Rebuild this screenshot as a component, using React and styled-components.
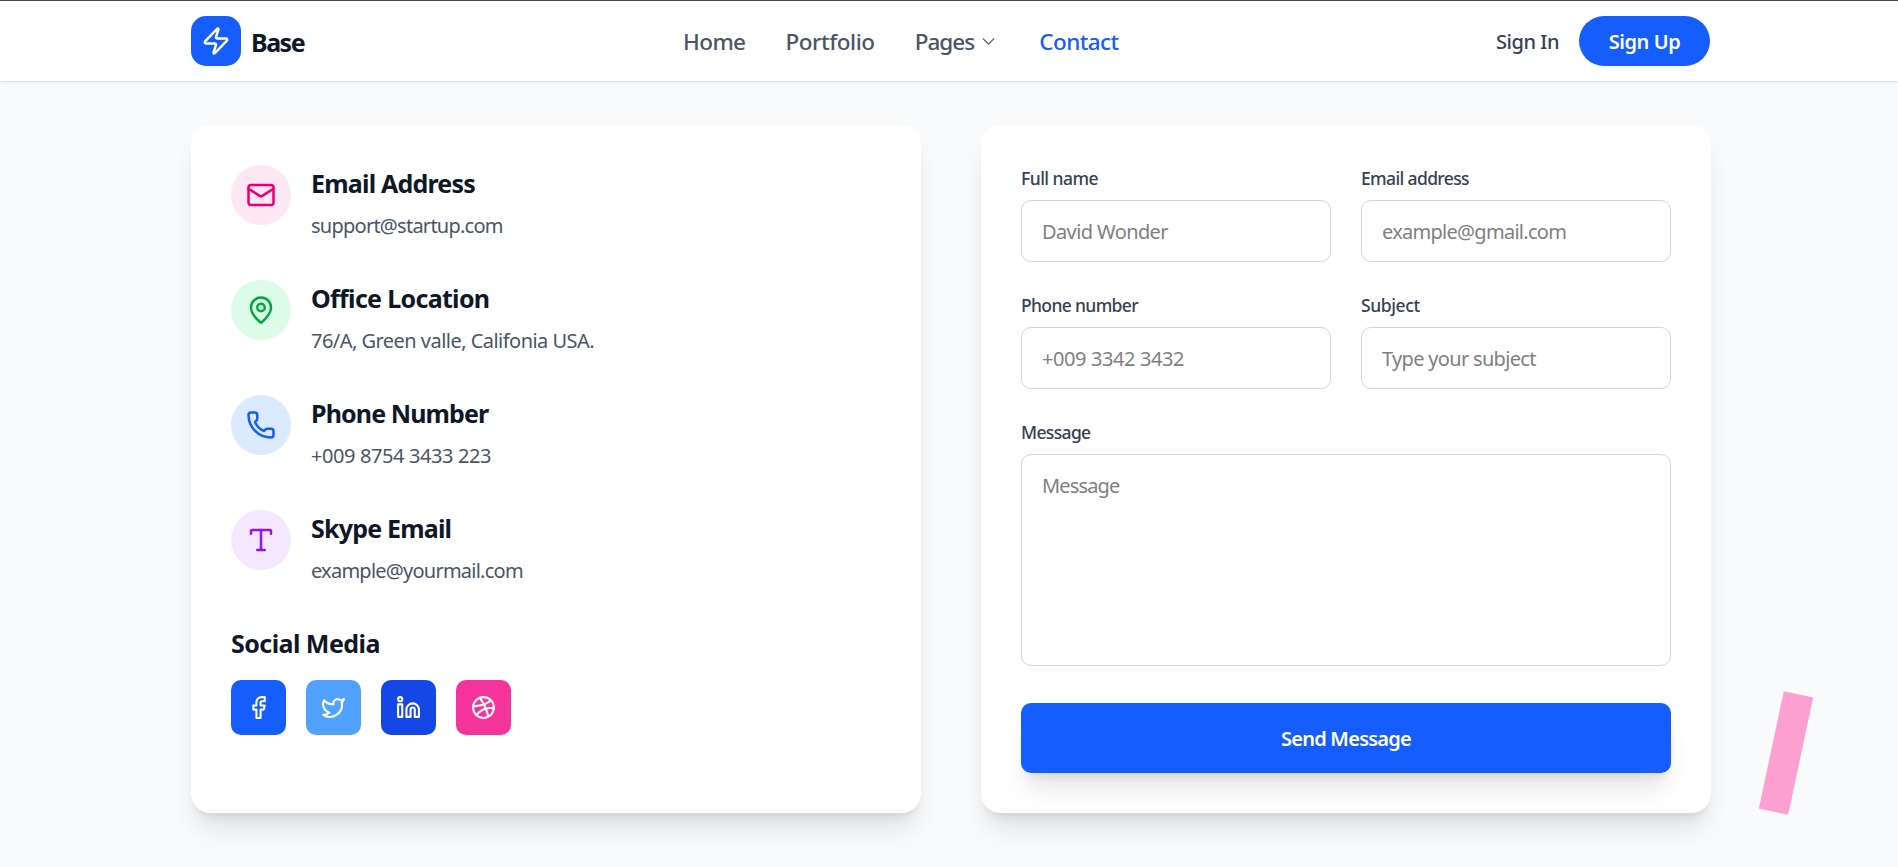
import React from "react";
import styled, { createGlobalStyle } from "styled-components";
import {
  Zap, ChevronDown, Mail, MapPin, Phone, Type,
  Facebook, Twitter, Linkedin, Dribbble,
} from "lucide-react";

const GlobalStyle = createGlobalStyle`
  *, *::before, *::after { box-sizing: border-box; }
  body {
    margin: 0;
    background: #f9fafb;
    font-family: "Noto Sans", "Open Sans", sans-serif;
    color: #101828;
    overflow: hidden;
  }
`;

const Page = styled.div`
  position: relative;
  height: 867px;
  overflow: hidden;
  background: #f9fafb;
`;

const Header = styled.header`
  position: relative;
  height: 81px;
  background: #fff;
  border-top: 1px solid #444;
  box-shadow: 0 1px 3px rgba(0, 0, 0, 0.1), 0 1px 2px -1px rgba(0, 0, 0, 0.1);
`;

const HeaderInner = styled.div`
  width: 1520px;
  height: 80px;
  margin: 0 auto 0 191px;
  padding-right: 1px;
  display: flex;
  align-items: center;
  justify-content: space-between;
`;

const Brand = styled.a`
  display: flex;
  align-items: center;
  gap: 10px;
  width: 492px;
`;

const BrandMark = styled.span`
  width: 50px;
  height: 50px;
  border-radius: 15px;
  background: #155dfc;
  color: #fff;
  display: grid;
  place-items: center;
`;

const BrandName = styled.span`
  font-size: 25px;
  line-height: 35px;
  font-weight: 700;
  letter-spacing: -1.5px;
  padding-top: 3px;
`;

const Nav = styled.nav`
  flex: 1;
  display: flex;
  align-items: center;
  gap: 40px;
`;

const NavLink = styled.a`
  display: flex;
  align-items: center;
  gap: 4px;
  padding-top: 1px;
  font-size: 22.5px;
  line-height: 32px;
  font-weight: 500;
  letter-spacing: ${(p) => p.$spacing || "-0.6px"};
  color: ${(p) => (p.$active ? "#155dfc" : "#4a5565")};
`;

const Actions = styled.div`
  display: flex;
  align-items: center;
  gap: 20px;
`;

const SignIn = styled.a`
  font-size: 20px;
  line-height: 30px;
  font-weight: 500;
  padding-top: 2px;
  letter-spacing: -0.45px;
  color: #364153;
`;

const SignUp = styled.button`
  width: 131px;
  height: 50px;
  border: 0;
  border-radius: 25px;
  background: #155dfc;
  color: #fff;
  font: 600 20px/30px "Noto Sans", "Open Sans", sans-serif;
  letter-spacing: -0.45px;
  padding: 2px 0 0;
`;

const Main = styled.main`
  width: 1520px;
  margin: 44px 0 0 191px;
  display: grid;
  grid-template-columns: 1fr 1fr;
  gap: 60px;
`;

const Card = styled.section`
  height: 688px;
  padding: 40px;
  border-radius: 20px;
  background: #fff;
  box-shadow: 0 20px 25px -5px rgba(0, 0, 0, 0.1), 0 8px 10px -6px rgba(0, 0, 0, 0.1);
`;

const InfoList = styled.div`
  display: flex;
  flex-direction: column;
  gap: 40px;
`;

const InfoItem = styled.div`
  display: flex;
  gap: 20px;
  height: 75px;
`;

const InfoIcon = styled.span`
  width: 60px;
  height: 60px;
  border-radius: 50%;
  display: grid;
  place-items: center;
  background: ${(p) => p.$bg};
  color: ${(p) => p.$fg};
`;

const InfoTitle = styled.h3`
  margin: 0;
  padding-top: 1px;
  font-size: 25px;
  line-height: 35px;
  font-weight: 700;
  letter-spacing: ${(p) => p.$spacing || "-0.8px"};
`;

const InfoText = styled.p`
  margin: 10px 0 0;
  font-size: 20px;
  line-height: 30px;
  letter-spacing: ${(p) => p.$spacing || "-0.4px"};
  color: #4a5565;
`;

const SocialTitle = styled(InfoTitle)`
  margin: 40px 0 19px;
`;

const SocialRow = styled.div`
  display: flex;
  gap: 20px;
`;

const SocialLink = styled.a`
  width: 55px;
  height: 55px;
  border-radius: 10px;
  background: ${(p) => p.$bg};
  color: #fff;
  display: grid;
  place-items: center;
`;

const Form = styled.form`
  display: grid;
  grid-template-columns: 1fr 1fr;
  gap: 30px;
`;

const Field = styled.label`
  display: flex;
  flex-direction: column;
  gap: 9px;
  grid-column: ${(p) => (p.$wide ? "1 / -1" : "auto")};
`;

const FieldLabel = styled.span`
  padding-top: 1px;
  font-size: 17.5px;
  line-height: 25px;
  font-weight: 500;
  letter-spacing: ${(p) => p.$spacing || "-0.4px"};
  color: #364153;
`;

const Input = styled.input`
  width: 100%;
  height: 62px;
  padding: 15px 20px;
  border: 1px solid #d1d5dc;
  border-radius: 10px;
  background: #fff;
  font: 400 20px/30px "Noto Sans", "Open Sans", sans-serif;
  letter-spacing: ${(p) => p.$spacing || "-0.4px"};
  &::placeholder { color: #808080; opacity: 1; }
`;

const TextArea = styled(Input)`
  height: 212px;
  padding-top: 16px;
  resize: none;
  display: block;
`;

const Submit = styled.button`
  grid-column: 1 / -1;
  height: 70px;
  margin-top: 7px;
  padding: 2px 0 0;
  border: 0;
  border-radius: 10px;
  background: #155dfc;
  color: #fff;
  font: 600 20px/30px "Noto Sans", "Open Sans", sans-serif;
  letter-spacing: -0.75px;
  box-shadow: 0 20px 25px -5px rgba(0, 0, 0, 0.1), 0 8px 10px -6px rgba(0, 0, 0, 0.1);
`;

const Accent = styled.div`
  position: absolute;
  left: 1771px;
  top: 693px;
  width: 30px;
  height: 120px;
  background: #fb64b6;
  opacity: 0.6;
  transform: rotate(12deg);
`;

const contacts = [
  { icon: Mail, title: "Email Address", text: "support@startup.com", bg: "#fce7f3", fg: "#e60076", textSpacing: "-0.75px" },
  { icon: MapPin, title: "Office Location", text: "76/A, Green valle, Califonia USA.", bg: "#dcfce7", fg: "#00a63e", titleSpacing: "-0.68px", textSpacing: "-0.53px" },
  { icon: Phone, title: "Phone Number", text: "+009 8754 3433 223", bg: "#dbeafe", fg: "#155dfc", titleSpacing: "-0.88px" },
  { icon: Type, title: "Skype Email", text: "example@yourmail.com", bg: "#f3e8ff", fg: "#9810fa", textSpacing: "-0.76px" },
];

const socials = [
  { icon: Facebook, bg: "#155dfc" },
  { icon: Twitter, bg: "#51a2ff" },
  { icon: Linkedin, bg: "#1447e6" },
  { icon: Dribbble, bg: "#f6339a" },
];

const fields = [
  { label: "Full name", placeholder: "David Wonder", labelSpacing: "-0.53px", spacing: "-0.6px" },
  { label: "Email address", placeholder: "example@gmail.com", labelSpacing: "-0.63px", spacing: "-0.72px" },
  { label: "Phone number", placeholder: "+009 3342 3432", labelSpacing: "-0.65px" },
  { label: "Subject", placeholder: "Type your subject", spacing: "-0.68px" },
];

export default function App() {
  return (
    <Page>
      <GlobalStyle />
      <Header>
        <HeaderInner>
          <Brand>
            <BrandMark><Zap size={30} /></BrandMark>
            <BrandName>Base</BrandName>
          </Brand>
          <Nav>
            <NavLink>Home</NavLink>
            <NavLink $spacing="-0.45px">Portfolio</NavLink>
            <NavLink $spacing="-0.95px">Pages <ChevronDown size={21} strokeWidth={1.5} /></NavLink>
            <NavLink $active>Contact</NavLink>
          </Nav>
          <Actions>
            <SignIn>Sign In</SignIn>
            <SignUp>Sign Up</SignUp>
          </Actions>
        </HeaderInner>
      </Header>
      <Main>
        <Card>
          <InfoList>
            {contacts.map(({ icon: Icon, ...c }) => (
              <InfoItem key={c.title}>
                <InfoIcon $bg={c.bg} $fg={c.fg}><Icon size={30} /></InfoIcon>
                <div>
                  <InfoTitle $spacing={c.titleSpacing}>{c.title}</InfoTitle>
                  <InfoText $spacing={c.textSpacing}>{c.text}</InfoText>
                </div>
              </InfoItem>
            ))}
          </InfoList>
          <SocialTitle $spacing="-0.55px">Social Media</SocialTitle>
          <SocialRow>
            {socials.map(({ icon: Icon, bg }) => (
              <SocialLink key={bg} $bg={bg}><Icon size={25} /></SocialLink>
            ))}
          </SocialRow>
        </Card>
        <Card>
          <Form>
            {fields.map((f) => (
              <Field key={f.label}>
                <FieldLabel $spacing={f.labelSpacing}>{f.label}</FieldLabel>
                <Input placeholder={f.placeholder} $spacing={f.spacing} />
              </Field>
            ))}
            <Field $wide>
              <FieldLabel $spacing="-0.65px">Message</FieldLabel>
              <TextArea as="textarea" placeholder="Message" $spacing="-0.85px" />
            </Field>
            <Submit type="button">Send Message</Submit>
          </Form>
        </Card>
      </Main>
      <Accent />
    </Page>
  );
}
